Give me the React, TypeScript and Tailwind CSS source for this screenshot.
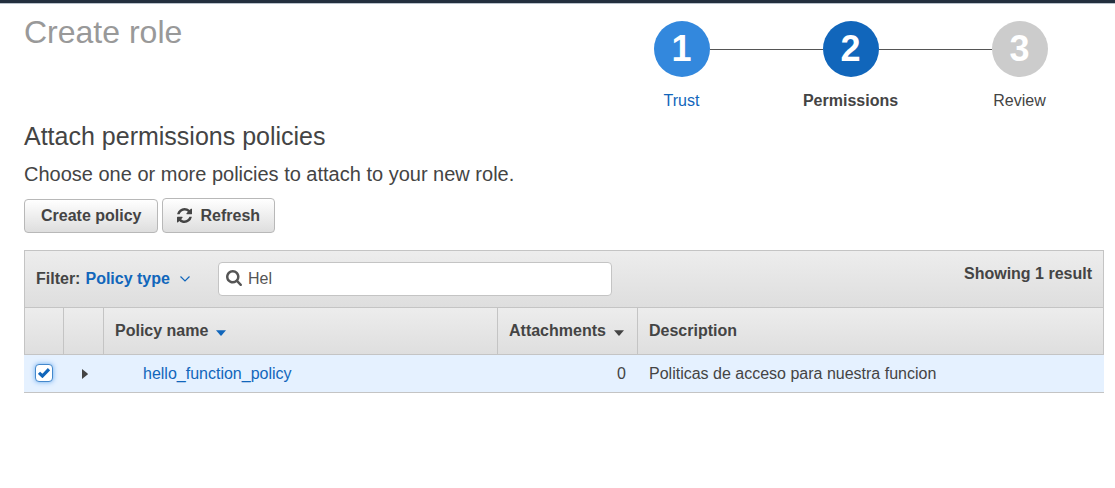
import { useState } from "react";

const steps = [
  { n: 1, label: "Trust", circle: "bg-[#3388dd]" },
  { n: 2, label: "Permissions", circle: "bg-[#1166bb]" },
  { n: 3, label: "Review", circle: "bg-[#cccccc]" },
];

const buttonClass =
  "flex items-center rounded-[4px] border border-[#b8b8b8] bg-linear-to-b from-white to-[#dedede] font-bold";

function Stepper() {
  return (
    <ol className="flex">
      {steps.map((step, i) => (
        <li key={step.n} className="flex w-[169px] flex-col items-center">
          <div className="flex w-full items-center">
            <span className={i > 0 ? "h-px flex-1 bg-[#555555]" : "h-px flex-1"} />
            <span
              className={`flex size-14 items-center justify-center rounded-full text-[36px] leading-none font-bold text-white ${step.circle}`}
            >
              {step.n}
            </span>
            <span className={i < steps.length - 1 ? "h-px flex-1 bg-[#555555]" : "h-px flex-1"} />
          </div>
          <div className="mt-3 leading-6">
            {i === 0 && (
              <a href="#trust" className="text-[#1166bb]">
                {step.label}
              </a>
            )}
            {i === 1 && <strong aria-current="step">{step.label}</strong>}
            {i === 2 && <span>{step.label}</span>}
          </div>
        </li>
      ))}
    </ol>
  );
}

function RefreshIcon() {
  return (
    <svg viewBox="0 0 1536 1536" className="size-[15px]" fill="currentColor" aria-hidden="true">
      <path d="M1511 928q0 5-1 7-64 268-268 434.500T764 1536q-146 0-282.500-55T238 1324l-129 129q-19 19-45 19t-45-19-19-45V960q0-26 19-45t45-19h448q26 0 45 19t19 45-19 45l-137 137q71 66 161 102t187 36q134 0 250-65t186-179q11-17 53-117 8-23 30-23h192q13 0 22.500 9.500t9.500 22.500zm25-800v448q0 26-19 45t-45 19h-448q-26 0-45-19t-19-45 19-45l138-138Q969 256 768 256q-134 0-250 65T332 500q-11 17-53 117-8 23-30 23H50q-13 0-22.500-9.500T18 608v-7q65-268 270-434.500T768 0q146 0 284 55.500T1297 212l130-129q19-19 45-19t45 19 19 45z" />
    </svg>
  );
}

function SearchIcon() {
  return (
    <svg viewBox="0 0 1664 1664" className="mb-[2px] size-4" fill="currentColor" aria-hidden="true">
      <path d="M1152 704q0-185-131.500-316.500T704 256 387.500 387.500 256 704t131.500 316.500T704 1152t316.500-131.500T1152 704zm512 832q0 52-38 90t-90 38q-54 0-90-38l-343-342q-179 124-399 124-143 0-273.500-55.500t-225-150-150-225T0 704t55.500-273.500 150-225 225-150T704 0t273.500 55.500 225 150 150 225T1408 704q0 220-124 399l343 343q37 37 37 90z" />
    </svg>
  );
}

function Caret({ className }: { className: string }) {
  return (
    <svg viewBox="0 0 10 6" className={className} fill="currentColor" aria-hidden="true">
      <path d="M0 0.300H10L5.500 5.400Q5 5.900 4.500 5.400Z" />
    </svg>
  );
}

export default function App() {
  const [query, setQuery] = useState("Hel");
  const [checked, setChecked] = useState(true);

  return (
    <div className="bg-white font-['Liberation_Sans',Arial,sans-serif] text-base text-[#444444]">
      <div className="h-1 border-b border-[#b9c2cc] bg-[#232f3e]" />
      <main className="pt-[17px] pr-[11px] pl-6">
        <header className="flex items-start justify-between">
          <h1 className="text-[32px] leading-[22px] text-[#999999]">Create role</h1>
          <Stepper />
        </header>

        <h2 className="mt-[7px] text-[25px] leading-8">Attach permissions policies</h2>
        <p className="mt-2 text-[20px] leading-7">Choose one or more policies to attach to your new role.</p>

        <div className="mt-[10px] flex items-end gap-1">
          <button type="button" className={`${buttonClass} h-[34px] px-4`}>
            Create policy
          </button>
          <button type="button" className={`${buttonClass} h-[35px] gap-2 px-[14px]`}>
            <RefreshIcon />
            Refresh
          </button>
        </div>

        <section className="mt-[17px]">
          <div className="flex h-[57px] items-center border border-b-0 border-[#c4c4c4] bg-linear-to-b from-[#ededed] to-[#dedede] px-[11px]">
            <span className="font-bold">Filter:</span>
            <button type="button" className="ml-[5px] flex items-center gap-[10px] font-bold text-[#1166bb]">
              Policy type
              <svg viewBox="0 0 10 6" className="h-[6px] w-[10px]" fill="none" stroke="currentColor" strokeWidth="1.200" aria-hidden="true">
                <path d="M0.500 0.500L5 5L9.500 0.500" />
              </svg>
            </button>
            <label className="ml-7 flex h-[34px] w-[394px] items-center gap-[6px] rounded-[4px] border border-[#c4c4c4] bg-white px-[7px] text-[#555555]">
              <SearchIcon />
              <input
                type="text"
                aria-label="Search policies"
                value={query}
                onChange={(e) => setQuery(e.target.value)}
                className="min-w-0 flex-1 bg-transparent outline-none"
              />
            </label>
            <span className="mb-[10px] ml-auto font-bold">Showing 1 result</span>
          </div>

          <table className="w-full table-fixed border-separate border-spacing-0 text-left">
            <colgroup>
              <col className="w-10" />
              <col className="w-10" />
              <col className="w-[394px]" />
              <col className="w-[140px]" />
              <col />
            </colgroup>
            <thead>
              <tr className="h-12 bg-linear-to-b from-[#ededed] to-[#dedede] *:border-y *:border-r *:border-[#c4c4c4] *:p-0">
                <th className="border-l" aria-label="Select" />
                <th aria-label="Expand" />
                <th>
                  <button type="button" className="flex items-center gap-2 pl-[11px] font-bold">
                    Policy name
                    <Caret className="mt-[3px] h-[6px] w-[10px] text-[#1166bb]" />
                  </button>
                </th>
                <th>
                  <button type="button" className="flex items-center gap-2 pl-[11px] font-bold">
                    Attachments
                    <Caret className="mt-[3px] h-[6px] w-[10px]" />
                  </button>
                </th>
                <th>
                  <span className="pl-[11px]">Description</span>
                </th>
              </tr>
            </thead>
            <tbody>
              <tr className="h-[38px] bg-[#e5f1ff] *:border-b *:border-[#c4c4c4] *:p-0">
                <td>
                  <label className="mb-[2px] ml-[11px] grid size-[18px] place-items-center">
                    <input
                      type="checkbox"
                      aria-label="Select hello_function_policy"
                      checked={checked}
                      onChange={(e) => setChecked(e.target.checked)}
                      className="col-start-1 row-start-1 size-[18px] appearance-none rounded-[4px] border border-[#4488cc] bg-white shadow-[0_0_5px_#66aaee]"
                    />
                    {checked && (
                      <svg viewBox="0 0 12 10" className="pointer-events-none col-start-1 row-start-1 h-[10px] w-3" fill="none" stroke="#1166bb" strokeWidth="3.200" aria-hidden="true">
                        <path d="M1 4.800L4.400 8L11 1.200" />
                      </svg>
                    )}
                  </label>
                </td>
                <td>
                  <button type="button" aria-label="Expand row" className="ml-[18px] flex">
                    <svg viewBox="0 0 6 10" className="h-[10px] w-[6px]" fill="currentColor" aria-hidden="true">
                      <path d="M0 0V10L5.600 5.500Q6 5 5.600 4.500Z" />
                    </svg>
                  </button>
                </td>
                <td>
                  <a href="#policy" className="pl-[39px] text-[#1166bb]">
                    hello_function_policy
                  </a>
                </td>
                <td className="text-right">
                  <span className="pr-3">0</span>
                </td>
                <td>
                  <span className="pl-[11px]">Politicas de acceso para nuestra funcion</span>
                </td>
              </tr>
            </tbody>
          </table>
        </section>
      </main>
    </div>
  );
}
